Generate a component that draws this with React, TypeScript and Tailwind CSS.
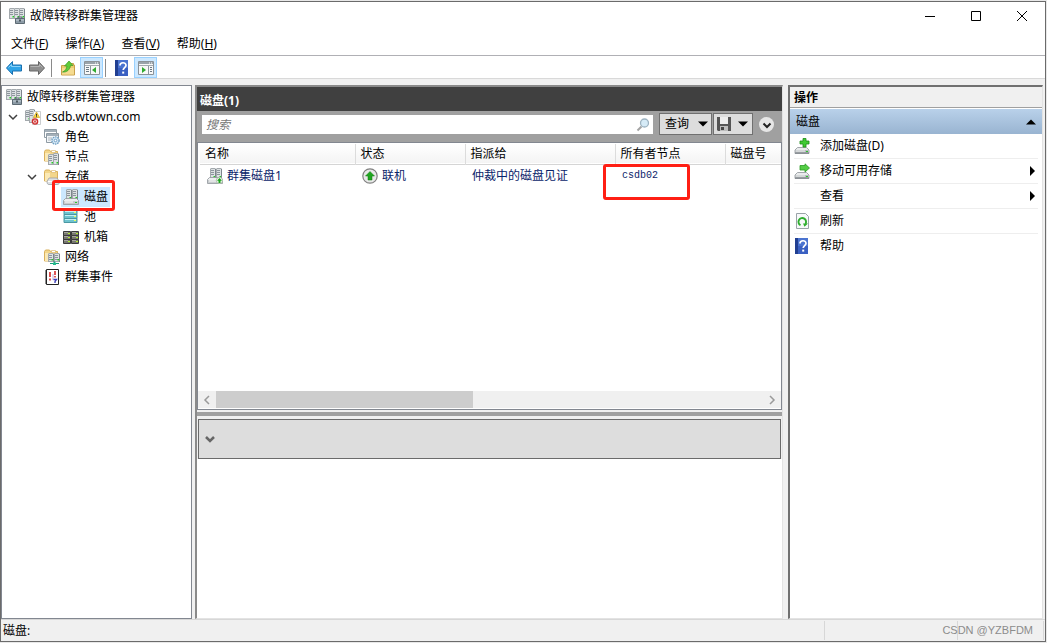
import React, { useState } from 'react';

type IconProps = { className?: string };

const Svg: React.FC<{ className?: string; children: React.ReactNode }> = ({ className = '', children }) => (
  <svg viewBox="0 0 16 16" className={`h-4 w-4 shrink-0 ${className}`} aria-hidden="true">
    {children}
  </svg>
);

// One small tower server, reused by most of the icons
const Tower: React.FC<{ x: number; y: number; h?: number }> = ({ x, y, h = 11 }) => (
  <g>
    <path d={`M${x} ${y + 1}l1-1h4l1 1v${h - 1}h-6z`} fill="#a3a9ad" />
    <path d={`M${x + 1} ${y + 1}h4v${h - 2}h-4z`} fill="#dde1e3" />
    <path d={`M${x + 1} ${y + 2.5}h3M${x + 1} ${y + 4.5}h3M${x + 1} ${y + 6.5}h3`} stroke="#77828a" strokeWidth=".8" />
    <path d={`M${x + 5} ${y + 1}h1v${h - 1}h-1z`} fill="#7d868c" />
    <path d={`M${x + 3.5} ${y + h - 3}h1.5v1.5h-1.500z`} fill="#22d122" />
  </g>
);

const Folder: React.FC = () => (
  <g>
    <path d="M.5 2.500l1-1.500h4l1 1.500h7v9.500H.5z" fill="#f3d68a" stroke="#d9b05c" />
    <path d="M7.500 1.500h4v2h-4z" fill="#fff" stroke="#d9b05c" strokeWidth=".6" />
    <path d="M1 4h5v8H1z" fill="#fbe9b5" />
  </g>
);

const Drive: React.FC = () => (
  <g>
    <path d="M3.500 9.500h9l2.500 2.500v3.500H1V12z" fill="#e9ebec" stroke="#8d9398" strokeWidth=".8" />
    <path d="M1 12h14v3H1z" fill="#b9bdc0" />
    <path d="M2 12.500h9v1H2z" fill="#f1f2f3" />
    <path d="M12 13h2v1h-2z" fill="#2bc52b" />
    <path d="M1 15h14" stroke="#777d82" />
  </g>
);

const ClusterIcon: React.FC<IconProps> = ({ className }) => (
  <Svg className={className}>
    <Tower x={0} y={0} />
    <Tower x={5} y={0} />
    <Tower x={10} y={0} />
    <path d="M9 10.500V9h4v1.500" fill="none" stroke="#58656e" />
    <path d="M6.500 10.500h9v5h-9z" fill="#8c9ba6" stroke="#5d6a73" />
    <path d="M7 12h8" stroke="#c7d1d8" />
    <path d="M10 11.500h2v2h-2z" fill="#4a565e" />
  </Svg>
);

const ClusterWarningIcon: React.FC<IconProps> = ({ className }) => (
  <Svg className={className}>
    <Tower x={0} y={1} />
    <Tower x={4} y={0} h={14} />
    <path d="M8.500 2.500h7v13h-8z" fill="#fff" stroke="#bcc0c3" strokeWidth=".8" />
    <path d="M11.500 3l3.200 5.500H8.300z" fill="#ffd83a" stroke="#c39a18" strokeWidth=".6" />
    <path d="M11.500 4.800v2M11.500 7.300v.8" stroke="#333" />
    <circle cx="10" cy="12.500" r="2.700" fill="#f4d3d3" stroke="#d02c2c" strokeWidth="1.200" />
    <path d="M8.800 11.300l2.400 2.400m0-2.400l-2.400 2.400" stroke="#d02c2c" />
  </Svg>
);

const RolesIcon: React.FC<IconProps> = ({ className }) => (
  <Svg className={className}>
    <path d="M.5.5h12v8H.5z" fill="#fff" stroke="#8f9ba4" />
    <path d="M1 1h11v2H1z" fill="#a4b0b9" />
    <path d="M2.500 4.500h12v9h-12z" fill="#f3f6f8" stroke="#8f9ba4" />
    <path d="M3 5h11v2H3z" fill="#a4b0b9" />
    <path d="M4 9h4M4 11h3" stroke="#b0b8be" />
    <circle cx="11.500" cy="11.500" r="3.600" fill="#d4e7f5" stroke="#6f9fc4" strokeWidth="1.400" strokeDasharray="1.500 .8" />
    <circle cx="11.500" cy="11.500" r="1.300" fill="#fff" stroke="#5b8fb9" strokeWidth=".8" />
  </Svg>
);

const NodesIcon: React.FC<IconProps> = ({ className }) => (
  <Svg className={className}>
    <Folder />
    <Tower x={4} y={5} />
    <Tower x={9} y={4} h={12} />
  </Svg>
);

const StorageIcon: React.FC<IconProps> = ({ className }) => (
  <Svg className={className}>
    <Folder />
    <path d="M3 12.500L5 9h8l2.500 3.500c0 2-.5 3-2.500 3H5c-1.500 0-2-1-2-3z" fill="#dfe1e3" stroke="#9a9fa3" strokeWidth=".8" />
    <path d="M4 12.500h11" stroke="#fff" />
  </Svg>
);

const DisksIcon: React.FC<IconProps & { online?: boolean }> = ({ className, online }) => (
  <Svg className={className}>
    <Tower x={3} y={0} />
    <Tower x={9} y={0} />
    <path d="M2.500 9.500h11l2 2v4H.5v-4z" fill="#eceeef" stroke="#8d9398" strokeWidth=".8" />
    <path d="M1 12h14v3H1z" fill="#c8ccce" />
    <path d="M2 12.500h8v1H2z" fill="#fff" />
    {online ? (
      <g>
        <circle cx="12.500" cy="12.500" r="3.200" fill="#eef6ec" stroke="#8da089" strokeWidth=".6" />
        <path d="M12.500 10l2.500 2.700h-1.500V15h-2v-2.300H10z" fill="#1ba31b" />
      </g>
    ) : (
      <path d="M12 13h2v1h-2z" fill="#2bc52b" />
    )}
  </Svg>
);

const PoolIcon: React.FC<IconProps> = ({ className }) => (
  <Svg className={className}>
    {[1, 5, 9].map((y) => (
      <g key={y}>
        <path d={`M1 ${y + 0.5}h13v4h-13z`} fill="#6fc3cf" stroke="#4b98a3" />
        <path d={`M2 ${y + 1.5}h11`} stroke="#c5f0f5" />
        <path d={`M11 ${y + 2}h2v1h-2z`} fill="#e8ff5a" />
      </g>
    ))}
  </Svg>
);

const EnclosureIcon: React.FC<IconProps> = ({ className }) => (
  <Svg className={className}>
    {[0, 8].map((x) =>
      [2, 6, 10].map((y) => (
        <g key={`${x}-${y}`}>
          <path d={`M${x + 0.5} ${y + 0.5}h7v4h-7z`} fill="#777770" stroke="#3a3a3a" />
          <path d={`M${x + 1} ${y + 1.5}h4`} stroke="#a6a69c" />
          <path d={`M${x + 5} ${y + 2}h2v1h-2z`} fill="#b4f02c" />
        </g>
      )),
    )}
  </Svg>
);

const NetworkIcon: React.FC<IconProps> = ({ className }) => (
  <Svg className={className}>
    <Folder />
    <Tower x={4} y={4} h={9} />
    <Tower x={10} y={4} h={9} />
    <path d="M6 14.500h9M10.500 12.500v2" stroke="#14a07a" strokeWidth="1.200" />
    <path d="M9 13.500h3v2.500H9z" fill="#22b98c" />
  </Svg>
);

const EventsIcon: React.FC<IconProps> = ({ className }) => (
  <Svg className={className}>
    <path d="M2.500.5h12v15h-12z" fill="#fff" stroke="#222" />
    <path d="M1 2h2M1 4h2M1 6h2M1 8h2M1 10h2M1 12h2M1 14h2" stroke="#222" />
    <path d="M6 3v5M6 9.500v2" stroke="#d42020" strokeWidth="1.600" />
    <path d="M11 2v4M11 7v1.500" stroke="#d42020" strokeWidth="1.500" />
    <path d="M9 5v6" stroke="#c4a9d4" />
    <path d="M9.500 10.500h3l-1.500 2v1.500" fill="none" stroke="#3a3ab5" strokeWidth="1.300" />
  </Svg>
);

const HelpIcon: React.FC<IconProps> = ({ className }) => (
  <Svg className={className}>
    <path d="M1 0h13v16H1z" fill="#3a60c2" />
    <path d="M1 0h3v16H1z" fill="#213f91" />
    <path d="M4 0h10v8H4z" fill="#4b74d0" />
    <path d="M6 5.500c0-3.600 6-3.600 6-.2 0 2.200-2.800 2.300-2.800 4.700" fill="none" stroke="#fff" strokeWidth="1.700" />
    <path d="M8.200 11.600h2v2h-2z" fill="#fff" />
  </Svg>
);

const ArrowIcon: React.FC<IconProps & { forward?: boolean }> = ({ className, forward }) => (
  <Svg className={className}>
    {forward ? (
      <g>
        <path d="M15.500 8L9.500 1.500v3.500H.5v6h9v3.500z" fill="#8f8f8f" stroke="#666" />
        <path d="M1.500 6.500h9v-2l3 3" fill="none" stroke="#b5b5b5" />
      </g>
    ) : (
      <g>
        <path d="M.5 8l6-6.500v3.500h9v6h-9v3.500z" fill="#2fa4e7" stroke="#1b6fae" />
        <path d="M2.500 7.500L5.500 4.500v2h9" fill="none" stroke="#8bd3fa" />
      </g>
    )}
  </Svg>
);

const UpFolderIcon: React.FC<IconProps> = ({ className }) => (
  <Svg className={className}>
    <path d="M1.500 5.500h7l1-2h4v1.500h1v10h-13z" fill="#eccb70" stroke="#c9a04a" />
    <path d="M2 8h12v6.500H2z" fill="#f5db90" />
    <path d="M2.500 12c3-1 4-3.500 4.500-6H4.500L9 1l4 4.500h-2.500C10 9.500 7 12.500 2.500 12z" fill="#5fcc3a" stroke="#3a9a24" strokeWidth=".7" />
  </Svg>
);

const PaneIcon: React.FC<IconProps & { right?: boolean }> = ({ className, right }) => (
  <Svg className={className}>
    <path d="M.5 1.500h15v13H.5z" fill="#f8f8f8" stroke="#8b9298" />
    <path d="M1 2h14v2H1z" fill="#9aa3aa" />
    <path d="M11 3h1M13 3h1" stroke="#fff" />
    <path d="M1 5.500h14" stroke="#a4abb0" />
    <path d={right ? 'M10.500 6v8' : 'M6.500 6v8'} stroke="#8e979e" />
    <path d={right ? 'M12 7.500h2M12 9.500h2M12 11.500h2' : 'M2 7.500h3M2 9.500h3M2 11.500h3'} stroke="#6d7b86" />
    <path d={right ? 'M4 7v6l4-3z' : 'M12 7v6l-4-3z'} fill="#2faa2f" />
  </Svg>
);

const DriveAddIcon: React.FC<IconProps> = ({ className }) => (
  <Svg className={className}>
    <Drive />
    <path d="M9 .5h3V3h3v3h-3v3H9V6H6V3h3z" fill="#3fca33" stroke="#1c8a18" strokeWidth=".8" />
  </Svg>
);

const DriveMoveIcon: React.FC<IconProps> = ({ className }) => (
  <Svg className={className}>
    <Drive />
    <path d="M6 2.500h5V.8L15.500 5 11 9V7H6z" fill="#53cd44" stroke="#2b9a24" strokeWidth=".8" />
  </Svg>
);

const RefreshIcon: React.FC<IconProps> = ({ className }) => (
  <Svg className={className}>
    <path d="M2.500.5h9l3 3v12h-12z" fill="#f7f9fa" stroke="#9aa3a8" />
    <path d="M6.500 12.200A3.800 3.800 0 1 1 11.400 11" fill="none" stroke="#2fae2f" strokeWidth="1.900" />
    <path d="M9 10.500h5l-3.500 3.300z" fill="#2fae2f" />
  </Svg>
);

const OnlineIcon: React.FC<IconProps> = ({ className }) => (
  <Svg className={className}>
    <circle cx="8" cy="8" r="7.200" fill="#e8e8e8" stroke="#808080" strokeWidth="1.200" />
    <path d="M8 3.500l4.500 4.500H10v4H6V8H3.500z" fill="#1fa51f" stroke="#0f7a0f" strokeWidth=".5" />
  </Svg>
);

const SearchIcon: React.FC<IconProps> = ({ className }) => (
  <Svg className={className}>
    <path d="M6.500 9.500L2.500 13.500" stroke="#a3a3a3" strokeWidth="2" />
    <circle cx="9.500" cy="6" r="4" fill="#d6ebf7" stroke="#9db3c1" strokeWidth="1.300" />
  </Svg>
);

const FloppyIcon: React.FC<IconProps> = ({ className }) => (
  <Svg className={className}>
    <path d="M1 1h14v14H2l-1-1z" fill="#555" />
    <path d="M4 1h8v7H4z" fill="#ececec" />
    <path d="M4 10h8v5H4z" fill="#bcbcbc" />
    <path d="M5 11h3v3H5z" fill="#444" />
  </Svg>
);

const Chevron: React.FC<IconProps> = ({ className = '' }) => (
  <svg viewBox="0 0 10 10" className={`h-[10px] w-[10px] shrink-0 ${className}`} aria-hidden="true">
    <path d="M1 3l4 4 4-4" fill="none" stroke="currentColor" strokeWidth="1.500" />
  </svg>
);

const Triangle: React.FC<IconProps> = ({ className = '' }) => (
  <svg viewBox="0 0 10 10" className={`h-[10px] w-[10px] shrink-0 ${className}`} aria-hidden="true">
    <path d="M0 2.500h10l-5 5z" fill="currentColor" />
  </svg>
);

const menus = [
  { label: '文件', hotkey: 'F' },
  { label: '操作', hotkey: 'A' },
  { label: '查看', hotkey: 'V' },
  { label: '帮助', hotkey: 'H' },
];

const tree = [
  { label: '故障转移群集管理器', level: 0, icon: ClusterIcon },
  { label: 'csdb.wtown.com', level: 1, icon: ClusterWarningIcon, open: true },
  { label: '角色', level: 2, icon: RolesIcon },
  { label: '节点', level: 2, icon: NodesIcon },
  { label: '存储', level: 2, icon: StorageIcon, open: true },
  { label: '磁盘', level: 3, icon: DisksIcon, marked: true },
  { label: '池', level: 3, icon: PoolIcon },
  { label: '机箱', level: 3, icon: EnclosureIcon },
  { label: '网络', level: 2, icon: NetworkIcon },
  { label: '群集事件', level: 2, icon: EventsIcon },
];

const indents = ['w-0', 'w-[19px]', 'w-[38px]', 'w-[57px]'];

const actions = [
  { label: '添加磁盘(D)', icon: DriveAddIcon },
  { label: '移动可用存储', icon: DriveMoveIcon, submenu: true },
  { label: '查看', submenu: true },
  { label: '刷新', icon: RefreshIcon },
  { label: '帮助', icon: HelpIcon },
];

const TitleBar: React.FC = () => (
  <header className="flex h-7 shrink-0 items-center pl-2">
    <ClusterIcon />
    <h1 className="ml-[5px] flex-1">故障转移群集管理器</h1>
    <button aria-label="最小化" className="flex h-full w-[46px] items-center justify-center">
      <svg viewBox="0 0 10 10" className="h-[10px] w-[10px]"><path d="M0 5.500h10" stroke="#000" /></svg>
    </button>
    <button aria-label="最大化" className="flex h-full w-[46px] items-center justify-center">
      <svg viewBox="0 0 10 10" className="h-[10px] w-[10px]"><path d="M.5.5h9v9h-9z" fill="none" stroke="#000" /></svg>
    </button>
    <button aria-label="关闭" className="flex h-full w-[46px] items-center justify-center">
      <svg viewBox="0 0 10 10" className="h-[10px] w-[10px]"><path d="M0 0l10 10M10 0L0 10" stroke="#000" /></svg>
    </button>
  </header>
);

const Toolbar: React.FC = () => (
  <div className="flex h-[23px] shrink-0 items-center border-b border-[#d9d9d9] pl-[5px] pt-px">
    <button aria-label="后退"><ArrowIcon /></button>
    <button aria-label="前进" className="ml-[7px]"><ArrowIcon forward /></button>
    <span className="ml-1.5 mr-2 h-[18px] w-px bg-[#8a8a8a]" />
    <button aria-label="上一级"><UpFolderIcon /></button>
    <button aria-label="显示控制台树" className="ml-1 flex h-[21px] w-[23px] items-center justify-center border border-[#99d1ff] bg-[#cce8ff]">
      <PaneIcon />
    </button>
    <span className="ml-0.5 mr-2 h-[18px] w-px bg-[#8a8a8a]" />
    <button aria-label="帮助"><HelpIcon /></button>
    <button aria-label="显示操作窗格" className="ml-1 flex h-[21px] w-[23px] items-center justify-center border border-[#99d1ff] bg-[#cce8ff]">
      <PaneIcon right />
    </button>
  </div>
);

const TreePane: React.FC = () => {
  const [selected, setSelected] = useState('磁盘');

  return (
    <nav className="w-[191px] shrink-0 border border-[#828790] bg-white pl-0.5 pt-px">
      <ul>
        {tree.map((item) => (
          <li key={item.label} className="flex h-5 items-center">
            <span className={`flex shrink-0 justify-end pr-[5px] text-[#404040] ${indents[item.level]} ${item.level ? '' : 'hidden'}`}>
              {item.open && <Chevron />}
            </span>
            <button
              onClick={() => setSelected(item.label)}
              className={`relative flex h-5 items-center gap-[5px] px-0.5 ${selected === item.label ? 'bg-[#cce8ff]' : ''}`}
            >
              <item.icon />
              <span className="whitespace-nowrap">{item.label}</span>
              {item.marked && (
                <span className="absolute -bottom-1 -left-[9px] -right-[5px] -top-[7px] z-10 rounded-[3px] border-3 border-[#ff1f14]" />
              )}
            </button>
          </li>
        ))}
      </ul>
    </nav>
  );
};

const SearchBar: React.FC = () => {
  const [query, setQuery] = useState('');

  return (
    <div className="flex h-[31px] shrink-0 items-start bg-[#a0a0a0] pl-[5px] pr-2 pt-0.5">
      <div className="mt-0.5 flex h-[19px] min-w-0 flex-1 items-center bg-white pr-0.5">
        <input
          aria-label="搜索"
          value={query}
          onChange={(e) => setQuery(e.target.value)}
          placeholder="搜索"
          className="min-w-0 flex-1 px-1 italic outline-none placeholder:text-[#777]"
        />
        <SearchIcon />
      </div>
      <button className="ml-[6px] flex h-[22px] w-[53px] items-center justify-between border border-[#707070] bg-[#ddd] pl-[5px] pr-[3px]">
        查询
        <Triangle />
      </button>
      <button aria-label="保存查询" className="ml-px flex h-[22px] w-10 items-center justify-between border border-[#707070] bg-[#ddd] pl-0.5 pr-1">
        <FloppyIcon />
        <Triangle />
      </button>
      <button aria-label="展开" className="ml-1.5 mt-1 flex h-[15px] w-[15px] items-center justify-center rounded-full bg-[#e6e6e6]">
        <svg viewBox="0 0 10 10" className="h-[10px] w-[10px]"><path d="M1.500 3.500L5 7l3.500-3.500" fill="none" stroke="#222" strokeWidth="2" /></svg>
      </button>
    </div>
  );
};

const DiskTable: React.FC = () => (
  <table className="w-full table-fixed text-left">
    <colgroup>
      <col className="w-[155px]" />
      <col className="w-[110px]" />
      <col className="w-[150px]" />
      <col className="w-[110px]" />
      <col />
    </colgroup>
    <thead>
      <tr className="h-5 border-b border-[#d5d5d5] bg-linear-to-b from-white to-[#f4f4f4]">
        {['名称', '状态', '指派给', '所有者节点', '磁盘号'].map((title) => (
          <th key={title} className="border-r border-[#dcdcdc] py-0 pl-[5px] font-normal last:border-r-0">
            {title}
          </th>
        ))}
      </tr>
    </thead>
    <tbody>
      <tr className="h-[23px] text-[#0a246a]">
        <td className="p-0 pl-[7px]">
          <span className="flex items-center gap-1"><DisksIcon online />群集磁盘1</span>
        </td>
        <td className="p-0 pl-[7px]">
          <span className="flex items-center gap-1"><OnlineIcon />联机</span>
        </td>
        <td className="p-0 pl-[7px]">仲裁中的磁盘见证</td>
        <td className="relative p-0 pl-[7px] font-['Liberation_Mono',monospace] text-[10px]">
          csdb02
          <span className="absolute -bottom-[13px] -left-3 -top-px w-[87px] rounded-[3px] border-3 border-[#ff1f14]" />
        </td>
        <td />
      </tr>
    </tbody>
  </table>
);

const DiskPane: React.FC = () => (
  <main className="ml-[3px] flex min-w-0 flex-1 flex-col border-l-2 border-t-2 border-r border-b border-[#8a8a8a] border-b-[#e3e3e3] border-r-[#e3e3e3] bg-[#f0f0f0]">
    <h2 className="flex h-6 shrink-0 items-center bg-[#404040] pl-[3px] pt-1 font-bold text-white">磁盘(1)</h2>
    <SearchBar />
    <div className="flex h-[268px] shrink-0 flex-col border border-[#828790] bg-white">
      <div className="flex-1 overflow-hidden pl-0.5 pt-px">
        <DiskTable />
      </div>
      <div className="mb-px flex h-[17px] items-center bg-[#f0f0f0] text-[#9a9a9a]">
        <button aria-label="向左滚动" className="flex w-[18px] justify-center"><Chevron className="rotate-90" /></button>
        <div className="h-full flex-1">
          <div className="h-full w-[47%] bg-[#cdcdcd]" />
        </div>
        <button aria-label="向右滚动" className="flex w-[18px] justify-center"><Chevron className="-rotate-90" /></button>
      </div>
    </div>
    <div className="mt-0.5 h-1 shrink-0 bg-[#a0a0a0]" />
    <div className="mx-px mt-[3px] flex h-10 shrink-0 items-center border border-[#6b6b6b] bg-[#ddd] pl-1.5">
      <button aria-label="展开详细信息" className="text-[#666]">
        <svg viewBox="0 0 10 10" className="h-[10px] w-[10px]"><path d="M1 3l4 4 4-4" fill="none" stroke="currentColor" strokeWidth="2.500" /></svg>
      </button>
    </div>
    <div className="flex-1 bg-white" />
  </main>
);

const ActionPane: React.FC = () => (
  <aside className="ml-[5px] mr-0.5 w-[255px] shrink-0 border-l-2 border-t-2 border-r border-b border-[#707070] border-b-[#e3e3e3] border-r-[#e3e3e3] bg-white">
    <h2 className="flex h-[21px] items-center border-b border-[#a0a0a0] bg-[#f0f0f0] pl-1 pt-0.5 font-bold">操作</h2>
    <button className="mt-px flex h-[25px] w-full items-center justify-between bg-linear-to-b from-[#b9d1ea] to-[#99b4d1] pl-1.5 pr-1.5">
      磁盘
      <Triangle className="rotate-180" />
    </button>
    <ul className="pl-1 pr-1">
      {actions.map((action) => (
        <li key={action.label} className="border-b border-[#eee] last:border-b-0">
          <button className="flex h-6 w-full items-center pr-0.5">
            <span className="w-[26px] shrink-0">{action.icon && <action.icon />}</span>
            <span className="flex-1 text-left">{action.label}</span>
            {action.submenu && (
              <svg viewBox="0 0 6 10" className="h-[10px] w-[6px]"><path d="M0 0v10l5-5z" /></svg>
            )}
          </button>
        </li>
      ))}
    </ul>
  </aside>
);

const App: React.FC = () => {
  return (
    <div className="h-screen bg-[#e8e8e8] pb-px pr-px pt-px font-['Noto_Sans','Noto_Sans_CJK_SC',sans-serif] text-[12px] leading-4 text-black">
      <div className="flex h-full flex-col overflow-hidden border border-[#6b6b6b] bg-white">
        <TitleBar />
        <div className="flex h-[26px] shrink-0 items-center gap-[17px] border-b border-[#b0b0b5] pl-2.5 pt-0.5">
          {menus.map((menu) => (
            <button key={menu.hotkey}>
              {menu.label}(<u>{menu.hotkey}</u>)
            </button>
          ))}
        </div>
        <Toolbar />
        <div className="flex min-h-0 flex-1 bg-[#f0f0f0] pt-[6px]">
          <TreePane />
          <DiskPane />
          <ActionPane />
        </div>
        <footer className="relative flex h-[22px] shrink-0 items-center border-t border-[#d7d7d7] bg-[#f0f0f0]">
          <span className="flex-1 pl-0.5">磁盘:</span>
          <span className="h-[19px] w-[133px] border-l border-[#d7d7d7]" />
          <span className="mr-px h-[19px] w-[87px] border-x border-[#d7d7d7]" />
          <span className="absolute right-3 top-0.5 font-['Liberation_Sans',sans-serif] text-[11px] text-[#8c8c8c]">CSDN @YZBFDM</span>
        </footer>
      </div>
    </div>
  );
};

export default App;
